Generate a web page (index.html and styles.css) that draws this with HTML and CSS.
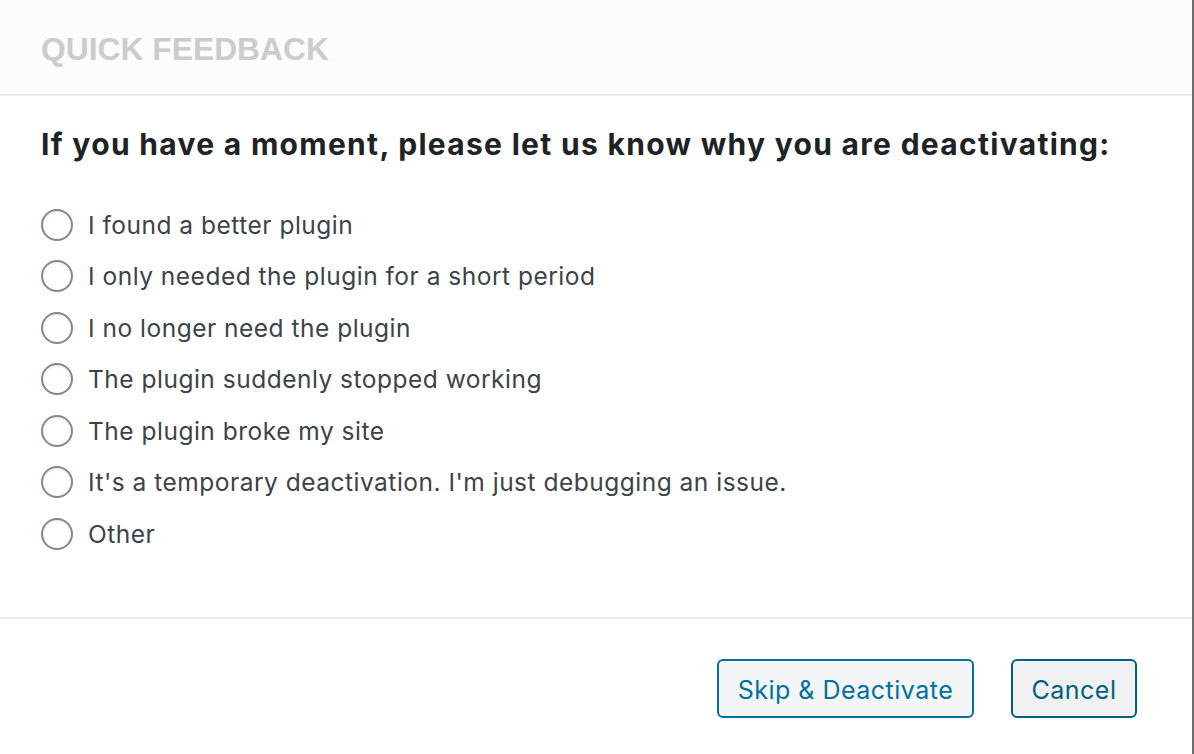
FILE: index.html
```html
<!DOCTYPE html>
<html>
<head>
<meta charset="utf-8">
<link rel="stylesheet" href="styles.css">
</head>
<body>
<div class="page">
  <div class="modal">
    <div class="modal-header"><h2 class="title">QUICK FEEDBACK</h2></div>
    <div class="modal-body">
      <h3 class="question">If you have a moment, please let us know why you are deactivating:</h3>
      <ul class="options">
        <li class="option"><span class="radio"></span><span class="label">I found a better plugin</span></li>
        <li class="option"><span class="radio"></span><span class="label">I only needed the plugin for a short period</span></li>
        <li class="option"><span class="radio"></span><span class="label">I no longer need the plugin</span></li>
        <li class="option"><span class="radio"></span><span class="label">The plugin suddenly stopped working</span></li>
        <li class="option"><span class="radio"></span><span class="label">The plugin broke my site</span></li>
        <li class="option"><span class="radio"></span><span class="label">It's a temporary deactivation. I'm just debugging an issue.</span></li>
        <li class="option"><span class="radio"></span><span class="label">Other</span></li>
      </ul>
    </div>
    <div class="modal-footer">
      <button class="btn btn-skip">Skip &amp; Deactivate</button>
      <button class="btn btn-cancel">Cancel</button>
    </div>
  </div>
  <div class="edge"></div>
</div>
</body>
</html>
```
FILE: styles.css
```css
html, body {
  margin: 0;
  padding: 0;
  background: #fff;
}
body {
  font-family: Inter, "Noto Sans", sans-serif;
}
.page {
  display: flex;
  width: 1194px;
  height: 754px;
  overflow: hidden;
}
.modal {
  width: 1192px;
  height: 754px;
  background: #fff;
  display: flex;
  flex-direction: column;
}
.edge {
  width: 2px;
  height: 754px;
  background: #6e6e6e;
}
.modal-header {
  height: 94px;
  background: #fcfcfc;
  border-bottom: 2px solid #ececec;
  display: flex;
  align-items: center;
  padding-left: 41px;
}
.title {
  margin: 0;
  padding-top: 5px;
  font-family: "Liberation Sans", Arial, sans-serif;
  font-weight: bold;
  font-size: 31.8px;
  color: #cccccc;
}
.modal-body {
  padding: 24px 41px 0;
  height: 497px;
  border-bottom: 2px solid #ececec;
}
.question {
  margin: 0 0 31px;
  font-size: 30px;
  line-height: 48px;
  font-weight: 700;
  letter-spacing: 1.3px;
  color: #1d2327;
}
.options {
  list-style: none;
  margin: 0;
  padding: 0;
}
.option {
  height: 51.5px;
  display: flex;
  align-items: center;
}
.radio {
  box-sizing: border-box;
  width: 32px;
  height: 32px;
  border-radius: 50%;
  border: 2px solid #7e8993;
  background: #fff;
  box-shadow: inset 0 1px 3px rgba(0,0,0,0.1);
  margin-right: 15px;
  flex: none;
}
.label {
  font-size: 24.5px;
  letter-spacing: 0.5px;
  color: #3c434a;
}
.modal-footer {
  display: flex;
  justify-content: flex-end;
  gap: 37px;
  padding: 40px 55px 0 0;
}
.btn {
  box-sizing: border-box;
  height: 59px;
  border-radius: 6px;
  border: 2px solid #0a6f9c;
  font-family: Inter, "Noto Sans", sans-serif;
  font-size: 25px;
  letter-spacing: 0.5px;
  padding: 2px 0 0;
}
.btn-skip {
  width: 257px;
  background: #f3f5f6;
  color: #0071a1;
  border-color: #0071a1;
}
.btn-cancel {
  width: 126px;
  background: #f1f1f1;
  color: #016087;
  border-color: #016087;
}
```
